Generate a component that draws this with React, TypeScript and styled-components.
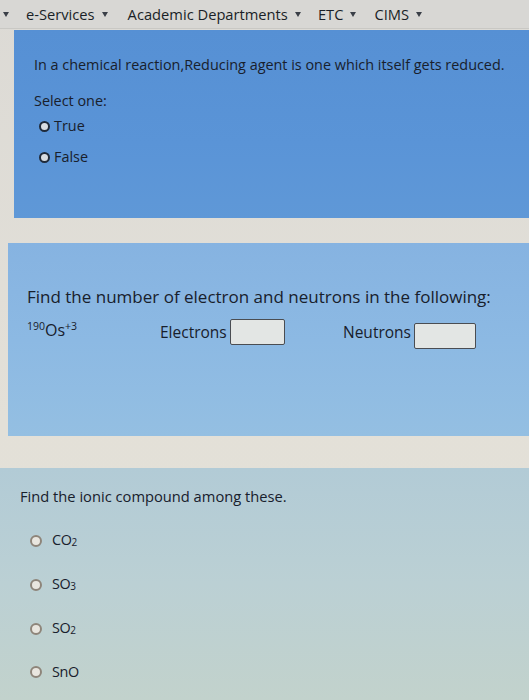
import React from "react";
import styled, { createGlobalStyle } from "styled-components";

const Global = createGlobalStyle`
  html, body { margin: 0; padding: 0; }
  body {
    background: #e1ded6;
    font-family: "Open Sans", "Noto Sans", sans-serif;
    color: #18202c;
    width: 529px;
    height: 700px;
    overflow: hidden;
  }
`;

const Page = styled.div`
  display: flex;
  flex-direction: column;
  width: 529px;
  height: 700px;
  background: linear-gradient(180deg, #dcdad5 0%, #e3e0d8 60%, #e4e1d6 100%);
`;

const NavBar = styled.nav`
  height: 28px;
  display: flex;
  align-items: center;
  padding-left: 3px;
  background: #d8d7d4;
  border-bottom: 1px solid #c9c8c4;
  font-size: 14.7px;
  color: #1a1f27;
`;

const NavItem = styled.div<{ $gap: number }>`
  display: flex;
  align-items: center;
  gap: 7px;
  margin-right: ${(p) => p.$gap}px;
  white-space: nowrap;
`;

const Caret = styled.span`
  width: 0;
  height: 0;
  border-left: 3.5px solid transparent;
  border-right: 3.5px solid transparent;
  border-top: 5px solid #3a3f47;
`;

const Card = styled.section<{ $bg: string; $left: number; $top: number; $h: number }>`
  margin-left: ${(p) => p.$left}px;
  margin-top: ${(p) => p.$top}px;
  height: ${(p) => p.$h}px;
  background: ${(p) => p.$bg};
  box-sizing: border-box;
  flex-shrink: 0;
`;

const Card1Body = styled.div`
  padding: 24px 0 0 20px;
  display: flex;
  flex-direction: column;
`;

const Question = styled.p<{ $size: number }>`
  margin: 0;
  font-size: ${(p) => p.$size}px;
  line-height: 22px;
  white-space: nowrap;
`;

const Prompt = styled.p`
  margin: 14px 0 0 0;
  font-size: 14.4px;
  line-height: 22px;
`;

const OptionList = styled.div<{ $gap: number; $top: number; $left: number }>`
  display: flex;
  flex-direction: column;
  gap: ${(p) => p.$gap}px;
  margin-top: ${(p) => p.$top}px;
  padding-left: ${(p) => p.$left}px;
`;

const Option = styled.label<{ $gap: number }>`
  display: flex;
  align-items: center;
  gap: ${(p) => p.$gap}px;
  font-size: 14.4px;
  line-height: 20px;
`;

const Radio = styled.span<{ $border: string; $fill: string; $size: number }>`
  width: ${(p) => p.$size}px;
  height: ${(p) => p.$size}px;
  border-radius: 50%;
  border: 2px solid ${(p) => p.$border};
  background: ${(p) => p.$fill};
  flex-shrink: 0;
`;

const Card2Body = styled.div`
  padding: 43px 0 0 19px;
  display: flex;
  flex-direction: column;
`;

const AnswerRow = styled.div`
  display: grid;
  grid-template-columns: 133px 183px auto;
  align-items: center;
  margin-top: 11px;
`;

const Isotope = styled.span`
  font-size: 16px;
  align-self: start;
  sup {
    font-size: 10.5px;
    vertical-align: 6px;
  }
`;

const Field = styled.div`
  display: flex;
  align-items: center;
  gap: 3px;
  font-size: 15.5px;
`;

const Box = styled.span<{ $w: number; $shift: number }>`
  display: inline-block;
  width: ${(p) => p.$w}px;
  height: 24px;
  border: 1.5px solid #4a4d52;
  border-radius: 2px;
  background: #e3e6e4;
  transform: translateY(${(p) => p.$shift}px);
`;

const Card3Body = styled.div`
  padding: 17px 0 0 20px;
  display: flex;
  flex-direction: column;
`;

const Formula = styled.span`
  font-size: 14.4px;
  letter-spacing: -0.4px;
  sub {
    font-size: 10px;
    vertical-align: -1px;
  }
`;

export default function App() {
  return (
    <>
      <Global />
      <Page>
        <NavBar>
          <NavItem $gap={17}>
            <Caret />
          </NavItem>
          <NavItem $gap={20}>
            e-Services <Caret />
          </NavItem>
          <NavItem $gap={17}>
            Academic Departments <Caret />
          </NavItem>
          <NavItem $gap={18}>
            ETC <Caret />
          </NavItem>
          <NavItem $gap={0}>
            CIMS <Caret />
          </NavItem>
        </NavBar>

        <Card $bg="linear-gradient(180deg,#5690d4 0%,#5a94d7 60%,#5f98d7 100%)" $left={14} $top={1} $h={188}>
          <Card1Body>
            <Question $size={14.4}>In a chemical reaction,Reducing agent is one which itself gets reduced.</Question>
            <Prompt>Select one:</Prompt>
            <OptionList $gap={11} $top={4} $left={5}>
              <Option $gap={4}>
                <Radio $border="#1f2a3a" $fill="#d8dde2" $size={7} />
                True
              </Option>
              <Option $gap={4}>
                <Radio $border="#1f2a3a" $fill="#d8dde2" $size={7} />
                False
              </Option>
            </OptionList>
          </Card1Body>
        </Card>

        <Card $bg="linear-gradient(180deg,#86b3e1 0%,#8cb9e3 50%,#94bfe2 100%)" $left={8} $top={25} $h={193}>
          <Card2Body>
            <Question $size={17}>Find the number of electron and neutrons in the following:</Question>
            <AnswerRow>
              <Isotope>
                <sup>190</sup>Os<sup>+3</sup>
              </Isotope>
              <Field>
                Electrons <Box $w={53} $shift={0} />
              </Field>
              <Field>
                Neutrons <Box $w={60} $shift={4} />
              </Field>
            </AnswerRow>
          </Card2Body>
        </Card>

        <Card $bg="linear-gradient(180deg,#b2cbd6 0%,#bbd0d4 50%,#c2d2cc 100%)" $left={0} $top={32} $h={232}>
          <Card3Body>
            <Question $size={14.7}>Find the ionic compound among these.</Question>
            <OptionList $gap={22} $top={23} $left={10}>
              <Option $gap={10}>
                <Radio $border="#8e857a" $fill="#e9e6df" $size={8} />
                <Formula>
                  CO<sub>2</sub>
                </Formula>
              </Option>
              <Option $gap={10}>
                <Radio $border="#8e857a" $fill="#e9e6df" $size={8} />
                <Formula>
                  SO<sub>3</sub>
                </Formula>
              </Option>
              <Option $gap={10}>
                <Radio $border="#8e857a" $fill="#e9e6df" $size={8} />
                <Formula>
                  SO<sub>2</sub>
                </Formula>
              </Option>
              <Option $gap={10}>
                <Radio $border="#8e857a" $fill="#e9e6df" $size={8} />
                <Formula>SnO</Formula>
              </Option>
            </OptionList>
          </Card3Body>
        </Card>
      </Page>
    </>
  );
}
